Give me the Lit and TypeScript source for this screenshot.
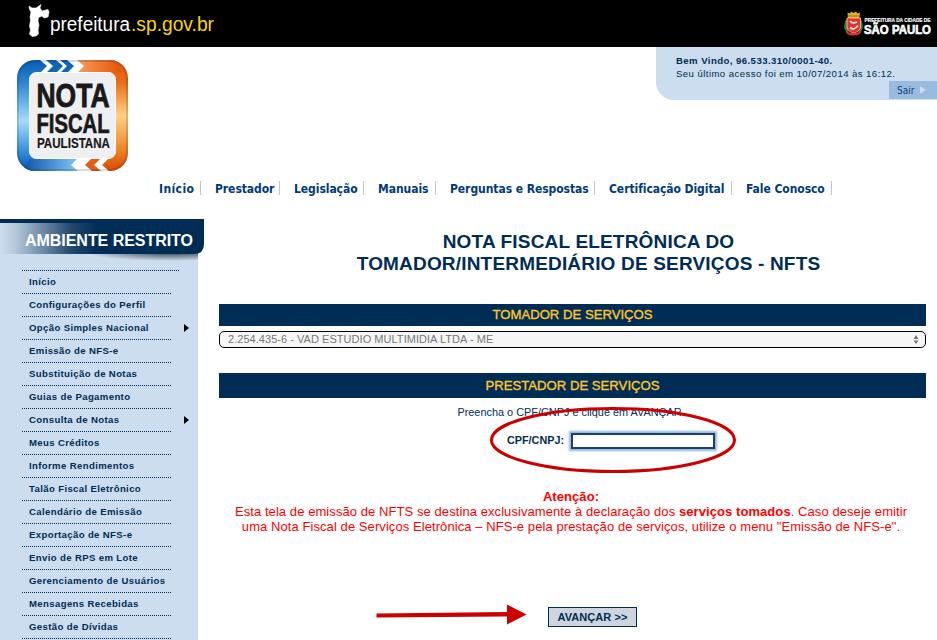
import { LitElement, html, css } from "lit";
import { customElement, property } from "lit/decorators.js";

@customElement("site-header")
class SiteHeader extends LitElement {
  static styles = css`
    :host { display: block; height: 47px; background: #000; }
    .bar { display: flex; justify-content: space-between; }
    svg { display: block; }
    text { font-family: "Liberation Sans", Arial, sans-serif; }
  `;
  render() {
    return html`<div class="bar">
      <svg width="240" height="47" viewBox="0 0 240 47">
        <path fill="#fff" stroke="#fff" stroke-width=".6" stroke-linejoin="round" d="M29 6 L32 8 L36 8 L41 4.500 L40 8 L42 11 L48 9.500 L49 12 L48 17 L44 18 L42 16 L38.500 17.500 L38 21 L39 25 L38 30 L38.500 34 L36 36 L32 36.500 L29.500 34 L30.500 30 L29.500 26 L30.500 20 L30 17 L31 12 L29.500 9.500 Z"/>
        <text x="50" y="31" font-size="19.5" fill="#fff" textLength="80" lengthAdjust="spacingAndGlyphs">prefeitura</text>
        <text x="131" y="31" font-size="19.5" fill="#fcd405" textLength="83" lengthAdjust="spacingAndGlyphs">.sp.gov.br</text>
      </svg>
      <svg width="97" height="47" viewBox="840 0 97 47">
        <path fill="#3c7a35" d="M845 21 L848 18 L850 30 L847 33 L844 28 Z M862 21 L859 18 L857 30 L860 33 L863 28 Z"/>
        <path fill="#e5b022" d="M848 18 L847.500 12.500 L850 13.500 L851 11.500 L853.500 13 L856 11.500 L857.500 13.500 L860 12.500 L859.500 18 Z"/>
        <path fill="#9a6f18" d="M848 15.500 H859.500 V16.500 H848 Z"/>
        <path fill="#e3312c" d="M847 18 H860.500 V27 Q860 31.500 853.700 33 Q847.500 31.500 847 27 Z" stroke="#f5ded6" stroke-width=".7"/>
        <path d="M850 21 Q852 24 857 22 M850 27.500 Q854 31 858 25.500" stroke="#fbe9e4" stroke-width="1.7" fill="none"/>
        <path d="M845.500 31 Q853.500 35 861.500 31 L860 34 Q853.500 37 847 34 Z" fill="#d7342c"/>
        <text x="864.500" y="21.500" font-size="5" font-weight="700" fill="#fff" stroke="#fff" stroke-width=".15" textLength="66" lengthAdjust="spacingAndGlyphs">PREFEITURA DA CIDADE DE</text>
        <text x="864" y="33.500" font-size="12" font-weight="700" fill="#fff" stroke="#fff" stroke-width=".6" textLength="67" lengthAdjust="spacingAndGlyphs">SÃO PAULO</text>
      </svg>
    </div>`;
  }
}

@customElement("nota-logo")
class NotaLogo extends LitElement {
  static styles = css`
    :host, svg { display: block; }
    svg { overflow: visible; }
    text { font-family: "Liberation Sans", Arial, sans-serif; font-weight: 700; fill: #1b1819; stroke: #1b1819; }
  `;
  render() {
    return html`<svg width="113" height="113" viewBox="16 59 113 113">
      <defs>
        <linearGradient id="blue" x1="0" y1="0" x2="0" y2="1">
          <stop offset="0" stop-color="#075bb0"/><stop offset=".2" stop-color="#2b85d0"/>
          <stop offset=".55" stop-color="#a4dcff"/><stop offset=".8" stop-color="#3b96df"/><stop offset="1" stop-color="#0752a8"/>
        </linearGradient>
        <linearGradient id="orange" x1="0" y1="0" x2="0" y2="1">
          <stop offset="0" stop-color="#e45608"/><stop offset=".2" stop-color="#e96c17"/>
          <stop offset=".5" stop-color="#ffd184"/><stop offset=".8" stop-color="#ed8728"/><stop offset="1" stop-color="#d94805"/>
        </linearGradient>
        <linearGradient id="topOrange"><stop offset="0" stop-color="#fba56a"/><stop offset="1" stop-color="#e25406"/></linearGradient>
        <linearGradient id="lowBlue"><stop offset="0" stop-color="#0752a8"/><stop offset="1" stop-color="#86caf8"/></linearGradient>
        <clipPath id="frame"><rect x="17" y="60" width="111" height="111" rx="18"/></clipPath>
      </defs>
      <g clip-path="url(#frame)">
        <rect x="17" y="60" width="56" height="111" fill="url(#blue)"/>
        <rect x="72" y="60" width="56" height="111" fill="url(#orange)"/>
        <path d="M72 60 H115 L122 72 H72 Z" fill="url(#topOrange)"/>
        <path d="M22 171 L30 159 H80 V171 Z" fill="url(#lowBlue)"/>
        <path d="M40 60 H77 L84 66 L77 73 H40 L47 66 Z" fill="#fff"/>
        <path d="M46 60 H56 L63 66 L56 73 H46 L53 66 Z M60 60 H67 L74 66 L67 73 H60 L67 66 Z" fill="#1264b6"/>
        <path d="M78 158 H109 L102 165 L109 171 H78 L71 165 Z" fill="#fff"/>
        <path d="M92 158 H101 L94 165 L101 171 H92 L85 165 Z" fill="#e65b12"/>
        <rect x="18" y="61" width="109" height="109" rx="17" fill="none" stroke="#123" stroke-opacity=".16" stroke-width="2"/>
      </g>
      <rect x="29.500" y="72.500" width="86" height="86" rx="7" fill="#eeeff1" stroke="#fff"/>
      <text x="36.500" y="106.500" font-size="33" stroke-width=".9" textLength="73" lengthAdjust="spacingAndGlyphs">NOTA</text>
      <text x="36.500" y="132.500" font-size="27" stroke-width=".7" textLength="73" lengthAdjust="spacingAndGlyphs">FISCAL</text>
      <text x="37" y="147.500" font-size="14" stroke-width=".2" textLength="73" lengthAdjust="spacingAndGlyphs">PAULISTANA</text>
    </svg>`;
  }
}

@customElement("side-menu")
class SideMenu extends LitElement {
  @property({ attribute: false }) items: { label: string; sub?: boolean }[] = [];
  static styles = css`
    :host { display: block; width: 204px; height: 421px; background: linear-gradient(#cbddee, #cbddee) 0 0 / 198px 100% no-repeat; color: #002d55; }
    .head { display: block; }
    .head text { font: 700 16px "Liberation Sans", Arial, sans-serif; fill: #fff; }
    .list { margin: 6px 0 0 22px; padding: 0; list-style: none; width: 167px; }
    .end, .row::before { content: ""; display: block; width: 150px; height: 1px; background: repeating-linear-gradient(90deg, #002d55 0 1px, transparent 1px 2px); }
    .row:first-child::before { width: 157px; }
    .item { display: flex; align-items: center; justify-content: space-between; height: 22px; padding-left: 7px; font: 700 9.6px/22px "Liberation Sans", Arial, sans-serif; letter-spacing: .36px; white-space: nowrap; }
    .arrow { width: 0; height: 0; border: 4.5px solid transparent; border-left: 5px solid #000; border-right: 0; }
  `;
  render() {
    return html`
      <svg class="head" width="204" height="45" viewBox="0 0 204 45">
        <defs>
          <linearGradient id="fade"><stop offset="0" stop-color="#cbddee"/><stop offset=".07" stop-color="#b7cadd"/><stop offset=".35" stop-color="#23496d"/><stop offset=".48" stop-color="#002d55"/></linearGradient>
          <radialGradient id="shade"><stop offset="0" stop-color="#1d2b38" stop-opacity=".9"/><stop offset="1" stop-color="#1d2b38" stop-opacity="0"/></radialGradient>
        </defs>
        <ellipse cx="170" cy="33" rx="84" ry="9" fill="url(#shade)"/>
        <path d="M198 4 H204 V45 H198Z" fill="#fff"/>
        <path d="M0 4 H204 V25 Q204 35 194 35 H0 Z" fill="url(#fade)"/>
        <path d="M0 0 H204 V4 H0 Z" fill="#002d55"/>
        <text x="25" y="26.500" textLength="168">AMBIENTE RESTRITO</text>
      </svg>
      <ul class="list">
        ${this.items.map((i) => html`<li class="row"><div class="item"><span>${i.label}</span>${i.sub ? html`<i class="arrow"></i>` : ""}</div></li>`)}
        <li class="end"></li>
      </ul>`;
  }
}

@customElement("app-root")
class AppRoot extends LitElement {
  static styles = css`
    :host { display: block; position: relative; width: 937px; height: 640px; overflow: hidden; background: #fff; color: #002d55; font-family: "Liberation Sans", Arial, sans-serif; }
    .banner { display: flex; justify-content: space-between; height: 132px; }
    .logo { margin: 12px 0 0 16px; }
    .welcome { width: 281px; height: 53px; box-sizing: border-box; background: #cbddee; border-bottom-left-radius: 18px; display: flex; flex-direction: column; font-size: 9.6px; line-height: 13px; padding: 7px 0 0 20px; letter-spacing: .43px; white-space: nowrap; }
    .exit { align-self: flex-end; display: flex; align-items: center; gap: 6px; box-sizing: border-box; width: 48px; height: 18px; margin-top: 1px; padding-left: 8px; background: #98bbdf; color: #0b4480; font: 10px "DejaVu Sans Condensed", "DejaVu Sans", sans-serif; letter-spacing: 0; }
    .tri { width: 0; height: 0; border: 4px solid transparent; border-left: 6px solid #cbddee; border-right: 0; }
    .nav { display: grid; grid-template-columns: 42px 79px 84px 72px 159px 137px 100px; margin-left: 159px; height: 40px; padding-top: 2px; box-sizing: border-box; }
    .link { height: 14px; border-right: 1px solid #c4c4c4; padding-left: 14px; font: 700 12px/16px "DejaVu Sans Condensed", "DejaVu Sans", sans-serif; color: #003a78; white-space: nowrap; letter-spacing: -.06px; }
    .link:first-child { padding-left: 0; letter-spacing: .4px; }
    .body { display: flex; gap: 15px; }
    .main { width: 707px; display: flex; flex-direction: column; align-items: center; }
    h1 { margin: 12px 0 0 32px; font-size: 19px; line-height: 22px; text-align: center; white-space: nowrap; letter-spacing: .18px; }
    h2 { margin: 0; width: 100%; background: #002d55; color: #ffc629; font-size: 13.15px; font-weight: 400; text-align: center; -webkit-text-stroke: .35px #ffc629; }
    .first { height: 22px; line-height: 21px; margin-top: 29px; }
    .second { height: 25px; line-height: 25px; margin-top: 25px; }
    .select { box-sizing: border-box; width: 707px; height: 17px; margin-top: 5px; border: 1px solid #000; border-radius: 5px; background: #f6f6f6; color: #777; font-size: 11px; line-height: 15px; padding: 0 6px 0 8px; display: flex; justify-content: space-between; align-items: center; letter-spacing: .04px; }
    .hint { margin: 7px 3px 0 0; font-size: 10.9px; line-height: 14px; white-space: nowrap; }
    .field { display: flex; align-items: center; gap: 7px; height: 17px; margin: 12px 0 0 288px; font-size: 10.8px; font-weight: 700; align-self: flex-start; }
    .input { box-sizing: border-box; width: 144px; height: 16px; border: 2px solid #1f3f63; background: #fff; box-shadow: 0 0 2px 2px #8fb8e6; margin-top: 3px; }
    .note { margin: 41px 3px 0 0; color: #f00; font-size: 13px; line-height: 15px; text-align: center; white-space: nowrap; letter-spacing: .075px; }
    .go { box-sizing: border-box; width: 89px; height: 20px; margin: 73px 0 0 40px; padding: 0; border: 1px solid #002d55; background: #ced5de; color: #002d55; font: 700 11px/18px "Liberation Sans", Arial, sans-serif; letter-spacing: .05px; }
    .marks { position: absolute; left: 0; top: 0; pointer-events: none; }
  `;
  private nav = ["Início", "Prestador", "Legislação", "Manuais", "Perguntas e Respostas", "Certificação Digital", "Fale Conosco"];
  private items = [
    { label: "Início" }, { label: "Configurações do Perfil" }, { label: "Opção Simples Nacional", sub: true },
    { label: "Emissão de NFS-e" }, { label: "Substituição de Notas" }, { label: "Guias de Pagamento" },
    { label: "Consulta de Notas", sub: true }, { label: "Meus Créditos" }, { label: "Informe Rendimentos" },
    { label: "Talão Fiscal Eletrônico" }, { label: "Calendário de Emissão" }, { label: "Exportação de NFS-e" },
    { label: "Envio de RPS em Lote" }, { label: "Gerenciamento de Usuários" }, { label: "Mensagens Recebidas" }, { label: "Gestão de Dívidas" },
  ];
  render() {
    return html`
      <site-header></site-header>
      <div class="banner">
        <nota-logo class="logo"></nota-logo>
        <div class="welcome"><b>Bem Vindo, 96.533.310/0001-40.</b><span>Seu último acesso foi em 10/07/2014 às 16:12.</span><div class="exit">Sair<i class="tri"></i></div></div>
      </div>
      <nav class="nav">${this.nav.map((n) => html`<div class="link">${n}</div>`)}</nav>
      <div class="body">
        <side-menu .items=${this.items}></side-menu>
        <main class="main">
          <h1>NOTA FISCAL ELETRÔNICA DO<br>TOMADOR/INTERMEDIÁRIO DE SERVIÇOS - NFTS</h1>
          <h2 class="first">TOMADOR DE SERVIÇOS</h2>
          <div class="select"><span>2.254.435-6 - VAD ESTUDIO MULTIMIDIA LTDA - ME</span>
            <svg width="6" height="9" viewBox="0 0 6 9"><path d="M3 0 L5.500 4 H.5Z M.5 5.500 H5.500 L3 9Z" fill="#777"/></svg></div>
          <h2 class="second">PRESTADOR DE SERVIÇOS</h2>
          <p class="hint">Preencha o CPF/CNPJ e clique em AVANÇAR.</p>
          <div class="field"><span>CPF/CNPJ:</span><div class="input"></div></div>
          <p class="note"><b>Atenção:</b><br>Esta tela de emissão de NFTS se destina exclusivamente à declaração dos <b>serviços tomados</b>. Caso deseje emitir<br>uma Nota Fiscal de Serviços Eletrônica – NFS-e pela prestação de serviços, utilize o menu "Emissão de NFS-e".</p>
          <button class="go">AVANÇAR &gt;&gt;</button>
        </main>
      </div>
      <svg class="marks" width="937" height="640" viewBox="0 0 937 640">
        <ellipse cx="613" cy="440" rx="121.500" ry="31.500" fill="none" stroke="#c00" stroke-width="3"/>
        <path d="M376.500 613.500 L507 612 V604.500 L526.500 614.500 L507 624.500 V616.500 L376.500 617.500 Z" fill="#c00"/>
      </svg>`;
  }
}
